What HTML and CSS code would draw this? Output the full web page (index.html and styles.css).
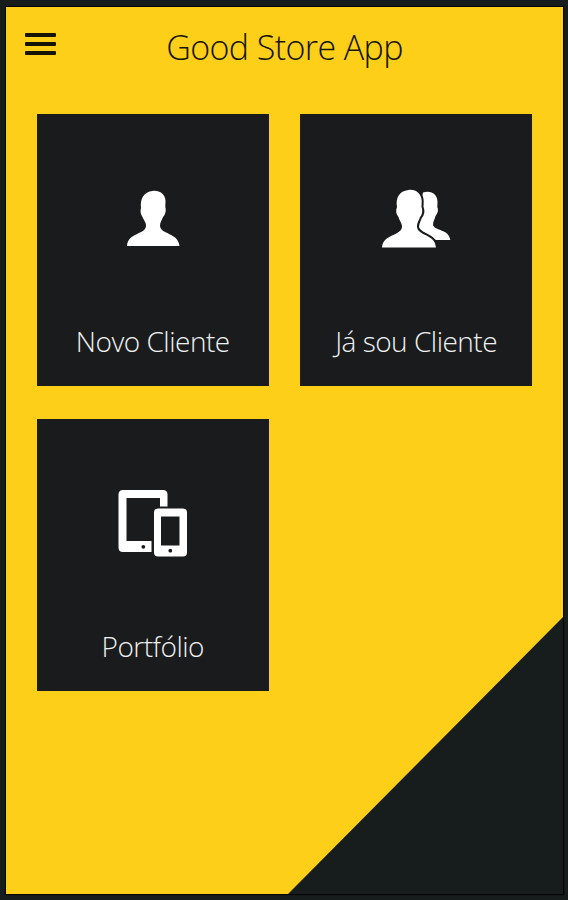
FILE: index.html
```
<!DOCTYPE html>
<html lang="pt-BR">
<head>
<meta charset="UTF-8">
<meta name="viewport" content="width=device-width, initial-scale=1.0">
<title>Good Store App</title>
<link rel="stylesheet" href="styles.css">
</head>
<body>

<div class="app">
    <header class="header">
        <button class="menu-button" type="button" aria-label="Menu">
            <span></span>
            <span></span>
            <span></span>
        </button>
        <h1 class="title">Good Store App</h1>
    </header>

    <main class="cards">
        <a class="card" href="#">
            <svg class="icon" viewBox="0 0 86 85" width="86" height="85">
                <path d="M42.5 16C49 15 55.5 19 55.5 26L55.3 32C56.500 36 55 40 53 42C52 45 50 47 50 51C51 60 68 57 69.500 71H17C18 57 35.500 60 36 51C36 47 33.500 45 32.500 42C30.500 39 30 36 31 33C30 23 34 17 42.500 16Z"/>
            </svg>
            <span class="label">Novo Cliente</span>
        </a>
        <a class="card" href="#">
            <svg class="icon" viewBox="0 0 93 85" width="93" height="85">
                <path d="M53 17.500C61 15 67.500 19 67.500 27L67.300 32C69 36 67 39 65.500 41C65 44 63 46 63 50C65 56 79 54 80.300 65H66L44 56Z"/>
                <path class="front" d="M38.500 15C46 14 51.500 19 51.700 26L51.500 32C53 36 52 40 50 42C49.300 45 47 47 47 52C48 61 65 59 66 72.500H12C13 59 31 61 32 52C32 48 29.500 46 28.500 42C26 39 25.500 36 27 32C25.500 23 29 16 38.500 15Z"/>
            </svg>
            <span class="label">Já sou Cliente</span>
        </a>
        <a class="card" href="#">
            <svg class="icon" viewBox="0 0 95 95" width="95" height="95">
                <path fill-rule="evenodd" d="M18 15H58Q62.500 15 62.500 19.500V31.500H52Q46.500 31.500 46.500 37V77H18Q13.500 77 13.500 72.500V19.500Q13.500 15 18 15ZM21.500 23V66H46.500V37Q46.500 31.500 52 31.500H55V23Z"/>
                <path fill-rule="evenodd" d="M53 33.500H78Q82 33.500 82 37.500V77.500Q82 81.500 78 81.500H53Q49 81.500 49 77.500V37.500Q49 33.500 53 33.500ZM56 41.500V70.500H74.500V41.500Z"/>
                <circle class="dot" cx="38.300" cy="71.800" r="1.900"/>
                <circle class="dot" cx="65.300" cy="75.700" r="1.900"/>
            </svg>
            <span class="label">Portfólio</span>
        </a>
    </main>
</div>

</body>
</html>
```
FILE: styles.css
```
* {
    box-sizing: border-box;
}

body {
    margin: 0;
    height: 900px;
    padding: 7px 5px 6px 6px;
    background-color: #171d1d;
    font-family: "Open Sans", "Noto Sans", sans-serif;
    overflow: hidden;
}

.app {
    position: relative;
    height: 887px;
    background-color: #fdcf18;
    box-shadow: 0 0 1px 1px #050505;
}

/* dark corner at the bottom right */
.app::after {
    content: "";
    position: absolute;
    right: 0;
    bottom: 0;
    width: 275px;
    height: 277px;
    background-color: #171d1d;
    clip-path: polygon(100% 0, 100% 100%, 0 100%);
}

.header {
    display: grid;
    grid-template-columns: 31px 1fr 31px;
    align-items: center;
    height: 107px;
    padding: 0 19px 31px;
}

.menu-button {
    display: flex;
    flex-direction: column;
    gap: 5px;
    padding: 0;
    margin-bottom: 2px;
    border: none;
    background: none;
}

.menu-button span {
    width: 31px;
    height: 4px;
    border-radius: 1px;
    background-color: #151406;
}

.title {
    margin: 3px 0 0;
    font-size: 34px;
    font-weight: 300;
    line-height: 46px;
    letter-spacing: -0.6px;
    text-align: center;
    white-space: nowrap;
    color: #151406;
}

.cards {
    display: grid;
    grid-template-columns: 231.5px 231.5px;
    gap: 32.5px 31.9px;
    padding-left: 31px;
}

.card {
    display: flex;
    flex-direction: column;
    align-items: center;
    justify-content: space-between;
    height: 272px;
    padding: 61px 0 26px;
    background-color: #191b1d;
    color: #f0f0f0;
    text-decoration: none;
}

.card:nth-child(3) {
    padding-top: 56.5px;
}

.icon {
    fill: #fff;
}

.front {
    stroke: #191b1d;
    stroke-width: 4px;
    paint-order: stroke;
}

.dot {
    fill: #191b1d;
}

.label {
    font-size: 28px;
    font-weight: 350;
    line-height: 38px;
    letter-spacing: -0.5px;
    white-space: nowrap;
}
```
